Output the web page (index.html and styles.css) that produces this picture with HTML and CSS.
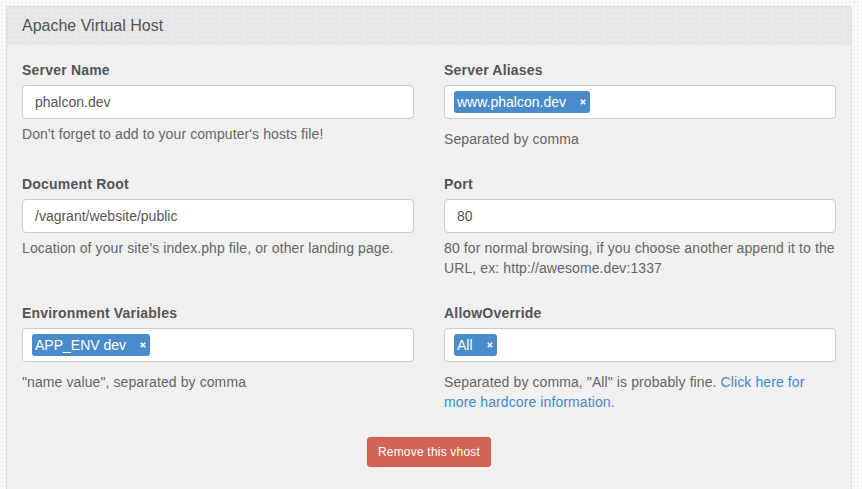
FILE: index.html
```html
<!DOCTYPE html>
<html>
<head>
<meta charset="utf-8">
<link rel="stylesheet" href="styles.css">
</head>
<body>
<div class="page">
  <div class="panel">
    <div class="panel-heading">
      <h3 class="panel-title">Apache Virtual Host</h3>
    </div>
    <div class="panel-body">
      <div class="grid">
        <div class="form-group">
          <label class="lbl">Server Name</label>
          <div class="form-control">phalcon.dev</div>
          <p class="help">Don't forget to add to your computer's hosts file!</p>
        </div>
        <div class="form-group">
          <label class="lbl">Server Aliases</label>
          <div class="form-control tags">
            <span class="tag">www.phalcon.dev<span class="rm"><svg width="6" height="6" viewBox="0 0 6 6"><path d="M0.8 0.8 L5.2 5.2 M5.2 0.8 L0.8 5.2" stroke="#fff" stroke-width="1.6"/></svg></span></span>
          </div>
          <p class="help">Separated by comma</p>
        </div>
        <div class="form-group">
          <label class="lbl">Document Root</label>
          <div class="form-control">/vagrant/website/public</div>
          <p class="help">Location of your site's index.php file, or other landing page.</p>
        </div>
        <div class="form-group">
          <label class="lbl">Port</label>
          <div class="form-control">80</div>
          <p class="help">80 for normal browsing, if you choose another append it to the URL, ex: http://awesome.dev:1337</p>
        </div>
        <div class="form-group">
          <label class="lbl">Environment Variables</label>
          <div class="form-control tags">
            <span class="tag">APP_ENV dev<span class="rm"><svg width="6" height="6" viewBox="0 0 6 6"><path d="M0.8 0.8 L5.2 5.2 M5.2 0.8 L0.8 5.2" stroke="#fff" stroke-width="1.6"/></svg></span></span>
          </div>
          <p class="help">"name value", separated by comma</p>
        </div>
        <div class="form-group">
          <label class="lbl">AllowOverride</label>
          <div class="form-control tags">
            <span class="tag">All<span class="rm"><svg width="6" height="6" viewBox="0 0 6 6"><path d="M0.8 0.8 L5.2 5.2 M5.2 0.8 L0.8 5.2" stroke="#fff" stroke-width="1.6"/></svg></span></span>
          </div>
          <p class="help">Separated by comma, "All" is probably fine. <a class="link" href="#">Click here for more hardcore information.</a></p>
        </div>
      </div>
      <div class="actions">
        <button class="btn-danger" type="button">Remove this vhost</button>
      </div>
    </div>
  </div>
</div>
</body>
</html>
```

FILE: styles.css
```css
html, body {
  margin: 0;
  padding: 0;
}
body {
  background-color: #fafafa;
  background-image: radial-gradient(#f0f0f0 0.8px, transparent 1px);
  background-size: 4px 4px;
  font-family: "Liberation Sans", Arial, sans-serif;
  font-size: 14px;
  line-height: 20px;
  color: #555;
}
.page {
  padding: 6px 10px 0 6px;
}
.panel {
  background: #f0f0f0;
  border: 1px solid #dedede;
  border-bottom: none;
  border-radius: 4px 4px 0 0;
}
.panel-heading {
  background-color: #e6e6e6;
  background-image: radial-gradient(#eeeeee 0.8px, transparent 1px);
  background-size: 6px 6px;
  padding: 10px 15px;
  border-radius: 3px 3px 0 0;
}
.panel-title {
  margin: 0;
  font-size: 16px;
  font-weight: normal;
  line-height: 18px;
  color: #555;
}
.panel-body {
  padding: 15px 15px 40px 15px;
}
.grid {
  display: grid;
  grid-template-columns: 1fr 1fr;
  column-gap: 30px;
}
.form-group {
  margin-bottom: 15px;
}
.lbl {
  display: block;
  font-weight: bold;
  margin-bottom: 5px;
  color: #555;
  letter-spacing: 0.2px;
}
.form-control {
  box-sizing: border-box;
  height: 34px;
  padding: 6px 12px;
  background: #fff;
  border: 1px solid #c5cdd8;
  border-radius: 4px;
  color: #555;
}
.form-control.tags {
  padding: 5px 9px;
  margin-bottom: 10px;
}
.tag {
  display: inline-flex;
  align-items: center;
  height: 22px;
  box-sizing: border-box;
  padding: 0 4px 0 3px;
  background: #4a8bca;
  color: #fff;
  border-radius: 3px;
  line-height: 22px;
}
.rm {
  display: inline-flex;
  margin-left: 14px;
}
.help {
  margin: 5px 0 10px 0;
  color: #666;
  letter-spacing: 0.1px;
}
.link {
  color: #428bca;
  text-decoration: none;
}
.actions {
  display: flex;
  justify-content: center;
}
.btn-danger {
  box-sizing: border-box;
  height: 30px;
  padding: 5px 10px;
  font-family: "Liberation Sans", Arial, sans-serif;
  font-size: 12px;
  line-height: 18px;
  letter-spacing: 0.2px;
  color: #fff;
  background: #d16456;
  border: 1px solid #cc5a4c;
  border-radius: 3px;
}
```
